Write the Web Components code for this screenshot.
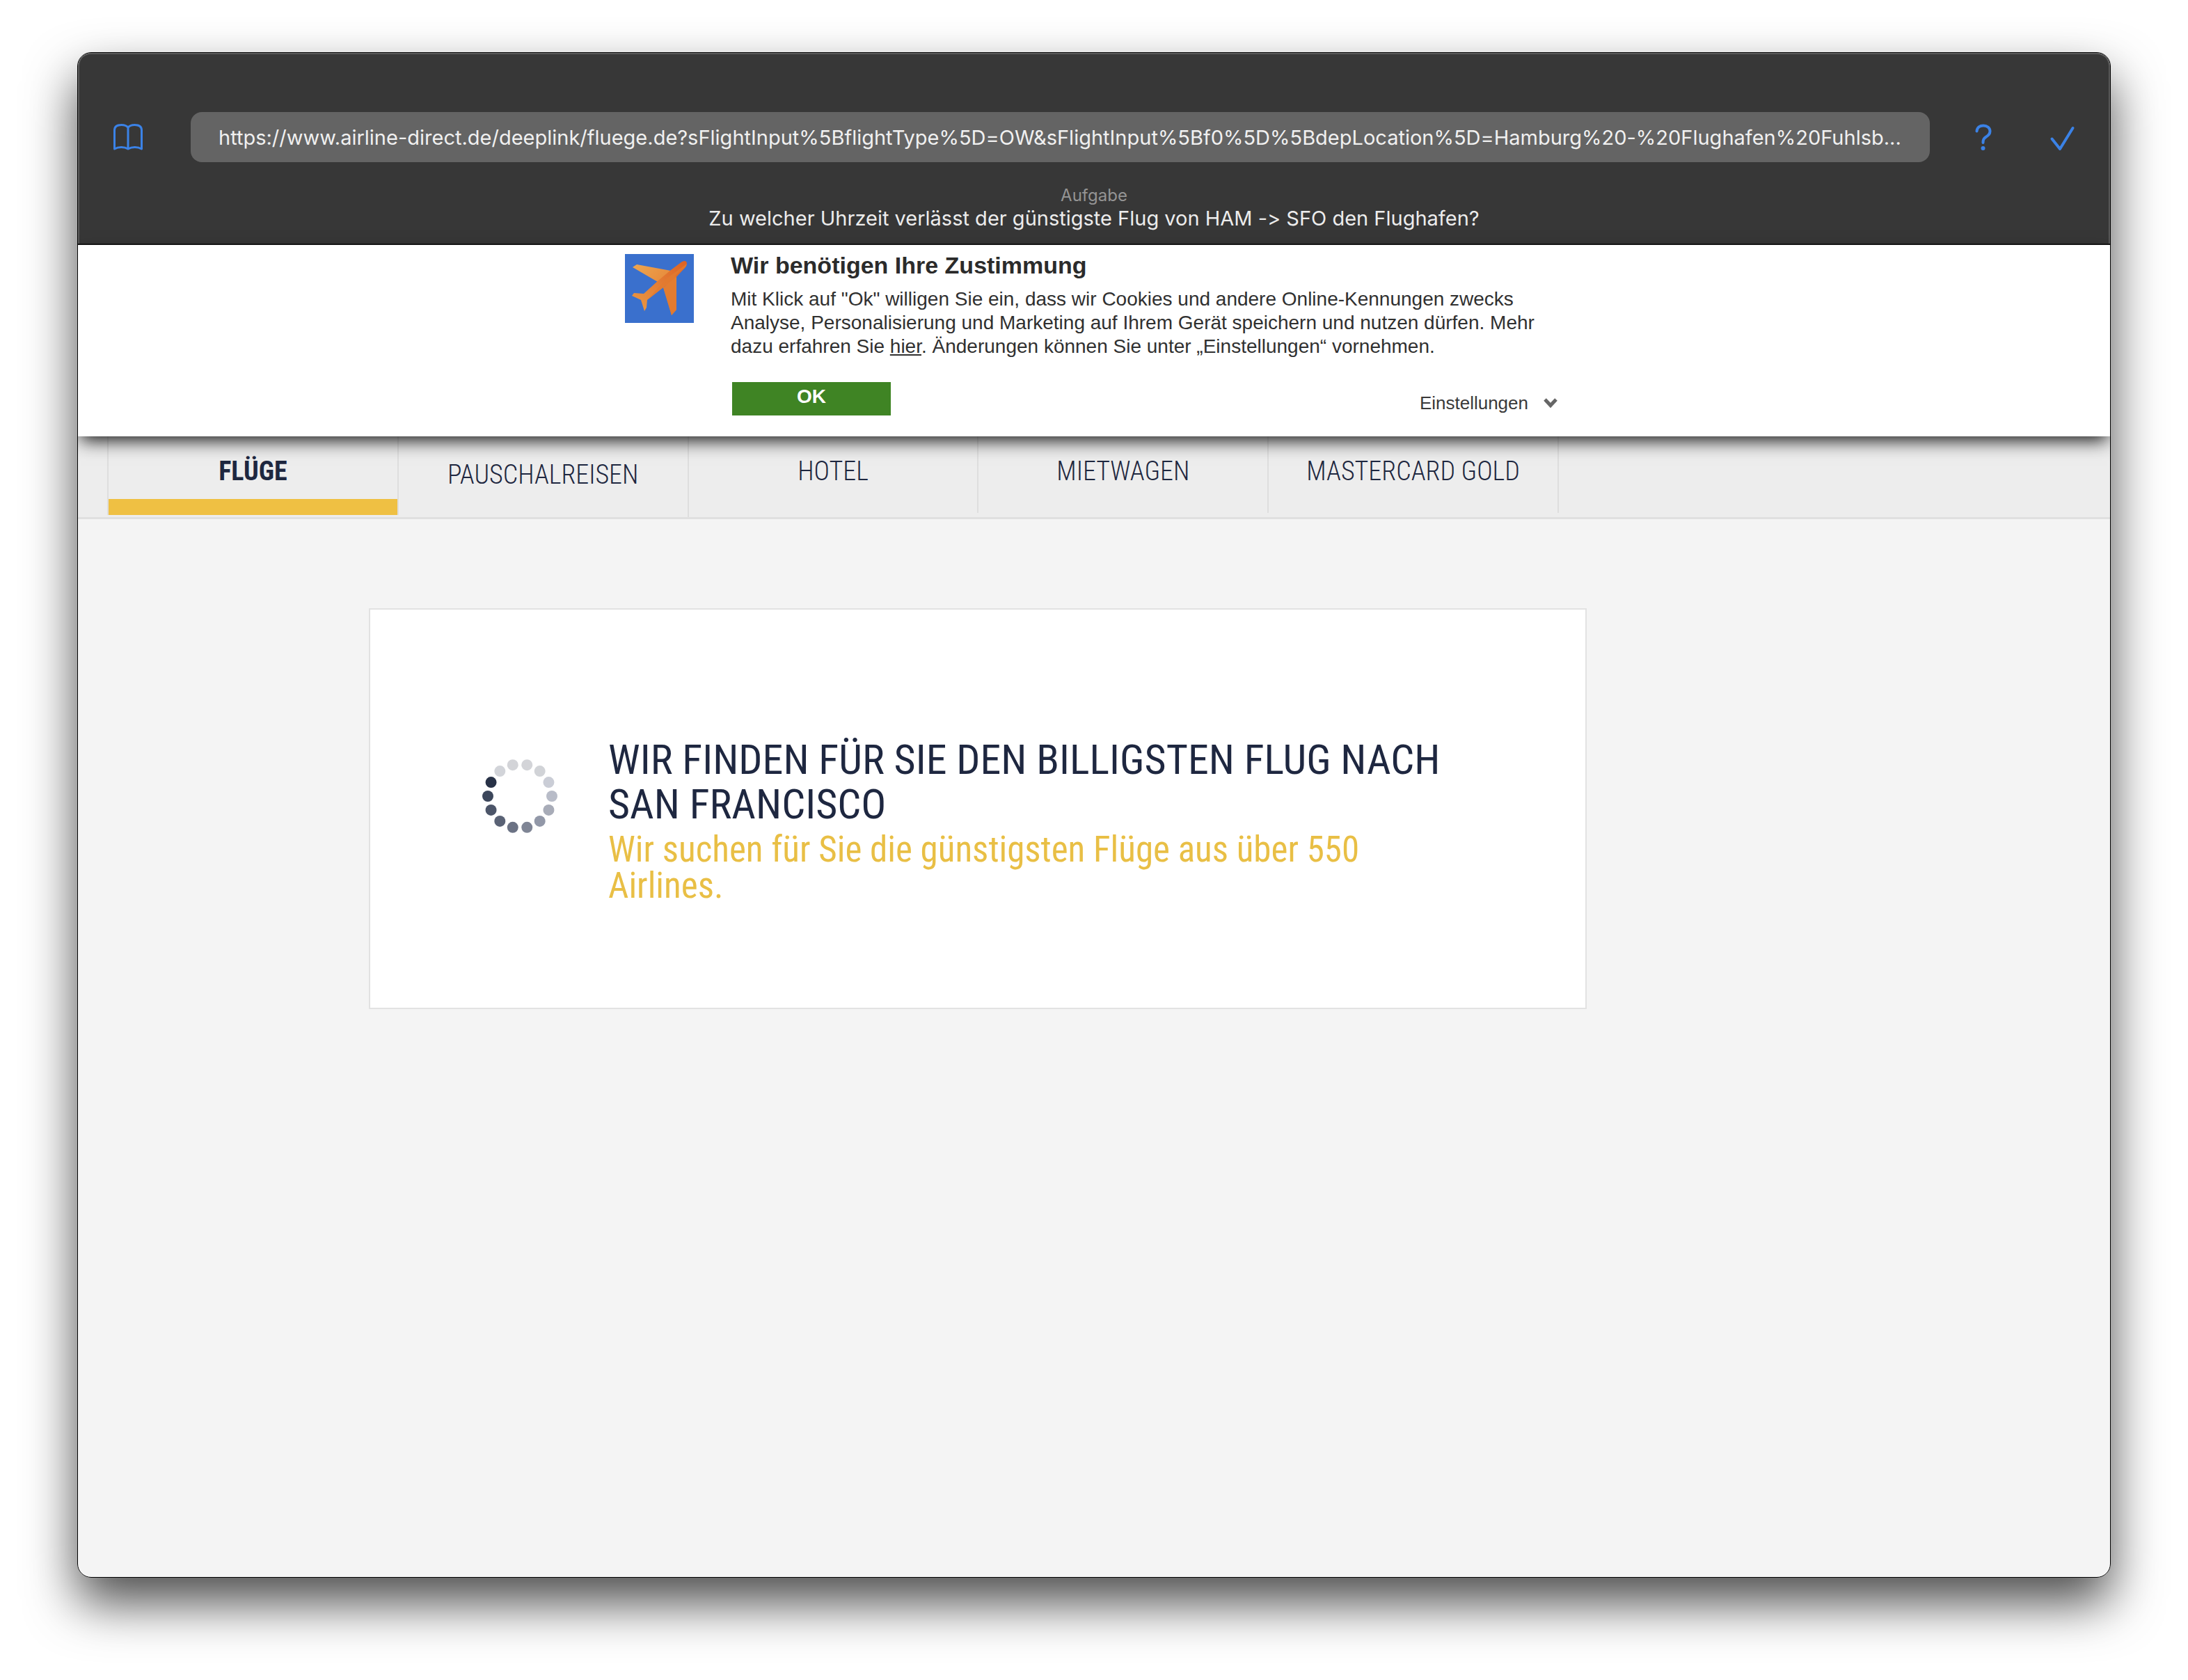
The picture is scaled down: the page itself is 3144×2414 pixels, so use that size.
<!DOCTYPE html>
<html lang="de">
<head>
<meta charset="utf-8">
<title>Airline Direct</title>
<style>
  html { background: #fff; }
  body { margin: 0; font-family: "Liberation Sans", Arial, sans-serif; }
</style>
</head>
<body>
<app-window>
  <task-toolbar slot="chrome" label="Aufgabe" task="Zu welcher Uhrzeit verlässt der günstigste Flug von HAM -&gt; SFO den Flughafen?"></task-toolbar>
  <consent-banner heading="Wir benötigen Ihre Zustimmung">Mit Klick auf "Ok" willigen Sie ein, dass wir Cookies und andere Online-Kennungen zwecks Analyse, Personalisierung und Marketing auf Ihrem Gerät speichern und nutzen dürfen. Mehr dazu erfahren Sie <a href="#info">hier</a>. Änderungen können Sie unter „Einstellungen“ vornehmen.</consent-banner>
  <site-nav>
    <nav-tab active>FLÜGE</nav-tab>
    <nav-tab low>PAUSCHALREISEN</nav-tab>
    <nav-tab>HOTEL</nav-tab>
    <nav-tab>MIETWAGEN</nav-tab>
    <nav-tab>MASTERCARD GOLD</nav-tab>
  </site-nav>
  <search-card>
    <span slot="title">WIR FINDEN FÜR SIE DEN BILLIGSTEN FLUG NACH SAN FRANCISCO</span>
    <span slot="subtitle">Wir suchen für Sie die günstigsten Flüge aus über 550 Airlines.</span>
  </search-card>
</app-window>

<script>
const define = (name, html, setup) => customElements.define(name, class extends HTMLElement {
  constructor() {
    super();
    const root = this.attachShadow({ mode: 'open' });
    root.innerHTML = html;
  }
  connectedCallback() { if (setup) setup(this, this.shadowRoot); }
});

define('app-window', `
<style>
  :host { display: block; padding: 75px 111px 147px; }
  .frame {
    box-sizing: border-box; min-height: calc(100vh - 222px);
    border: 1px solid #000; border-radius: 20px; overflow: hidden;
    background: #f4f4f4; display: flex; flex-direction: column;
  }
  .shadow { border-radius: 20px; box-shadow: 0 36px 72px rgba(0,0,0,.7); }
</style>
<div class="shadow"><div class="frame"><slot name="chrome"></slot><slot></slot></div></div>`);

define('task-toolbar', `
<style>
  :host {
    display: block; background: #373737; color: #ececec;
    border-bottom: 2px solid #161616; box-shadow: inset 0 2px #5c5c5c, inset 2px 0 #5c5c5c, inset -2px 0 #5c5c5c;
    border-radius: 19px 19px 0 0; padding: 85px 0 18px;
    font-family: Inter, "Noto Sans", sans-serif;
    font-feature-settings: "calt" 0;
  }
  .bar { display: flex; align-items: center; padding: 0 46px 0 50px; }
  button { border: 0; padding: 0; background: none; width: 44px; height: 44px; }
  svg { display: block; width: 44px; height: 44px; fill: none; stroke: #3b82e6; stroke-width: 3; stroke-linecap: round; stroke-linejoin: round; }
  input {
    flex: 1; min-width: 0; box-sizing: border-box; height: 72px; margin: 0 55px 0 68px; padding: 0 38px 0 40px;
    border: 0; border-radius: 16px; background: #646464; color: #f0f0f0;
    font: 29px Inter, "Noto Sans", sans-serif; font-feature-settings: "calt" 0; text-overflow: ellipsis;
  }
  .actions { display: flex; gap: 70px; }
  .task { margin: 33px 0 0; text-align: center; }
  .label { display: block; font-size: 24px; line-height: 30px; color: #949494; }
  .text { display: block; font-size: 29px; line-height: 36px; }
</style>
<div class="bar">
  <button aria-label="Lesezeichen"><svg viewBox="0 0 44 44"><path d="M22 8.500C20 5.500 16.500 4.500 12.500 4.500C6 4.500 2.500 7 2.500 12V39C8 35.500 16.500 35.500 22 39C27.500 35.500 36 35.500 41.500 39V12C41.500 7 38 4.500 31.500 4.500C27.500 4.500 24 5.500 22 8.500ZM22 8.500V39"/></svg></button>
  <input type="text" aria-label="Adresse" readonly value="https://www.airline-direct.de/deeplink/fluege.de?sFlightInput%5BflightType%5D=OW&amp;sFlightInput%5Bf0%5D%5BdepLocation%5D=Hamburg%20-%20Flughafen%20Fuhlsb...">
  <div class="actions">
    <button aria-label="Hilfe"><svg viewBox="0 0 44 44"><path d="M12.500 13.500C13 8 17 5.500 22 5.500C27.500 5.500 31.500 9 31.500 13.500C31.500 18 29 19.500 26 21.500C22.500 24 21.500 25.500 21.500 30" stroke-width="4"/><circle cx="21.500" cy="38" r="3" fill="#3b82e6" stroke="none"/></svg></button>
    <button aria-label="Fertig"><svg viewBox="0 0 44 44"><path d="M6.500 24.500L18 39L36.500 9" stroke-width="4"/></svg></button>
  </div>
</div>
<p class="task"><span class="label"></span><span class="text"></span></p>`,
(host, root) => {
  root.querySelector('.label').textContent = host.getAttribute('label');
  root.querySelector('.text').textContent = host.getAttribute('task');
});

define('consent-banner', `
<style>
  :host {
    display: block; position: relative; z-index: 1; background: #fff; color: #303030;
    box-shadow: 0 10px 24px -4px rgba(0,0,0,.9); padding: 10px 0 30px;
  }
  .inner { display: flex; align-items: flex-start; max-width: 1348px; margin: 0 auto; }
  .logo { flex: none; width: 99px; height: 99px; margin: 3px 53px 0 0; }
  .body { flex: 1; max-width: 1188px; }
  h2 { margin: 0; font-size: 34px; line-height: 38px; color: #2b2b2b; }
  p { margin: 13px 0 0; font-size: 28px; line-height: 34px; }
  ::slotted(a) { color: inherit; }
  .row { display: flex; justify-content: space-between; align-items: flex-start; margin-top: 34px; }
  .ok {
    width: 228px; height: 48px; border: 0; padding: 0 0 6px; margin-left: 2px;
    background: #3f8424; color: #fff; font: bold 28px "Liberation Sans", Arial, sans-serif;
  }
  .more {
    border: 0; padding: 0; margin-top: 14px; background: none; color: #3a3a3a; display: flex; align-items: center; gap: 22px;
    font: 26px/32px "Liberation Sans", Arial, sans-serif;
  }
  .more svg { width: 20px; height: 16px; fill: none; stroke: #666; stroke-width: 5; }
</style>
<div class="inner">
  <svg class="logo" viewBox="0 0 99 99" aria-hidden="true">
    <defs>
      <linearGradient id="w" x1="0" y1="0" x2="1" y2="1"><stop offset="0" stop-color="#eda650"/><stop offset="1" stop-color="#e2752b"/></linearGradient>
      <linearGradient id="f" x1="0" y1="1" x2="1" y2="0"><stop offset="0" stop-color="#ea9a45"/><stop offset="1" stop-color="#dd6224"/></linearGradient>
    </defs>
    <rect width="99" height="99" fill="#3a70cd"/>
    <path fill="url(#w)" d="M11 19L17 15L66 24L56 49L66 36L74 28L74 80L67 88L55 48L47 40Z"/>
    <path fill="url(#f)" d="M66 23L82 11Q88 8 89 13Q89 17 86 20L73 34L32 66L31 77L28 82L23 66L10 60L13 56L27 57L48 38Z"/>
    <path fill="#e27a30" d="M89 14Q88 18 86 20L73 30L74 80L67 88L55 48L32 66L60 35Z" opacity=".8"/>
  </svg>
  <div class="body">
    <h2></h2>
    <p><slot></slot></p>
    <div class="row">
      <button class="ok">OK</button>
      <button class="more">Einstellungen<svg viewBox="0 0 20 16"><path d="M2 3L10 11.500L18 3"/></svg></button>
    </div>
  </div>
</div>`,
(host, root) => { root.querySelector('h2').textContent = host.getAttribute('heading'); });

define('site-nav', `
<style>
  :host { display: block; background: #ededed; border-bottom: 3px solid #e0e0e0; padding-left: 42px; height: 116px; }
  nav { display: flex; max-width: 2086px; align-items: flex-start; }
</style>
<nav><slot></slot></nav>`);

define('nav-tab', `
<style>
  :host { flex: 1 1 0; min-width: 0; box-sizing: border-box; height: 110px; border-right: 2px solid #dedede; display: block; }
  :host(:first-child) { border-left: 2px solid #dedede; }
  :host([low]) { height: 116px; }
  a {
    display: block; box-sizing: border-box; height: 100%; padding-top: 27px; text-align: center; text-decoration: none; color: #1e2740; white-space: nowrap;
    font: 300 38px/46px "Roboto Condensed", "Liberation Sans Narrow", Roboto, sans-serif;
  }
  :host([low]) a { padding-top: 32px; }
  :host([active]) { height: 113px; }
  :host([active]) a { font-weight: 700; border-bottom: 23px solid #efc043; }
</style>
<a href="#"><slot></slot></a>`);

define('loading-ring', `
<style>
  :host { display: block; width: 110px; height: 110px; }
  svg { display: block; width: 100%; height: 100%; }
</style>
<svg viewBox="0 0 110 110" role="img" aria-label="Laden"></svg>`,
(host, root) => {
  const colors = ['#3c465b', '#283247', '#d2d4d9', '#d3d4d8', '#d3d4d8', '#d1d3d7', '#cacdd6', '#b8bcc8', '#a8acb8', '#9298a8', '#7f8595', '#6b7284', '#5a6275', '#4c5569'];
  root.querySelector('svg').innerHTML = colors.map((c, i) => {
    const a = Math.PI + i * 2 * Math.PI / colors.length;
    return `<circle cx="${55 + 46 * Math.cos(a)}" cy="${55 + 46 * Math.sin(a)}" r="8" fill="${c}"/>`;
  }).join('');
});

define('search-card', `
<style>
  :host { display: block; max-width: 2500px; padding: 128px 0 0 43px; }
  section {
    box-sizing: border-box; width: 70%; margin: 0 auto; padding: 184px 160px 149px; background: #fff; border: 2px solid #e2e2e2;
    display: flex; align-items: flex-start; gap: 72px;
    font-family: "Roboto Condensed", "Liberation Sans Narrow", Roboto, sans-serif;
  }
  loading-ring { flex: none; margin-top: 29px; }
  .copy { flex: 1; max-width: 1230px; }
  h1 { margin: 0; font-size: 60px; line-height: 64px; font-weight: 400; color: #1e2740; }
  p { margin: 7px 0 0; font-size: 51px; line-height: 52px; color: #e9bf45; }
</style>
<section>
  <loading-ring></loading-ring>
  <div class="copy"><h1><slot name="title"></slot></h1><p><slot name="subtitle"></slot></p></div>
</section>`);
</script>
</body>
</html>
